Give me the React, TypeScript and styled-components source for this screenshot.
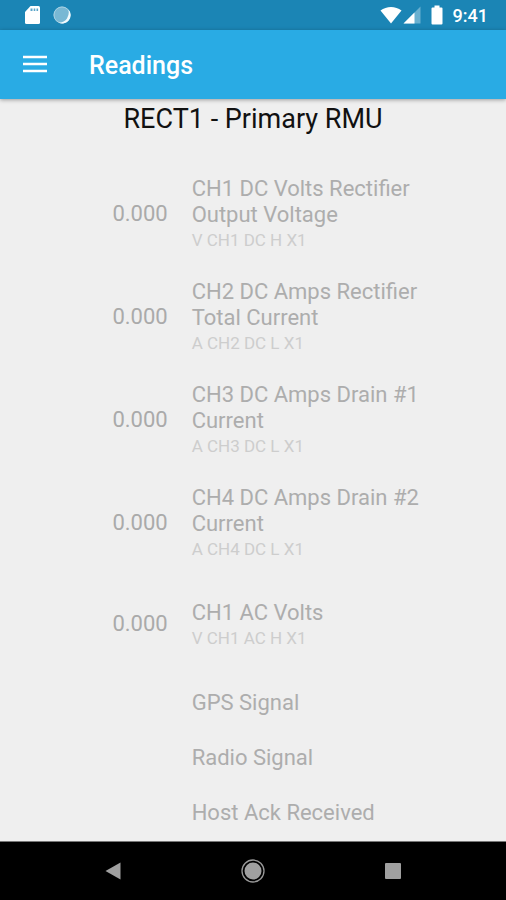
import React from "react";
import styled, { createGlobalStyle } from "styled-components";

const GlobalStyle = createGlobalStyle`
  * { box-sizing: border-box; }
  body {
    margin: 0;
    background: #efefef;
    font-family: Roboto, "Liberation Sans", sans-serif;
  }
`;

const Screen = styled.div`
  min-height: 100vh;
  display: flex;
  flex-direction: column;
`;

const StatusBar = styled.header`
  display: flex;
  align-items: center;
  justify-content: space-between;
  height: 30px;
  padding: 0 18px 0 24px;
  background: #1b85b5;
  color: #fff;
`;

const StatusGroup = styled.div<{ $gap: number }>`
  display: flex;
  align-items: center;
  gap: ${(p) => p.$gap}px;
`;

const Clock = styled.time`
  padding-top: 2px;
  font-size: 18px;
  font-weight: 500;
  line-height: 20px;
`;

const AppBar = styled.div`
  display: flex;
  align-items: center;
  gap: 39px;
  height: 69px;
  padding: 0 20px;
  background: #29abe4;
  color: #fff;
  box-shadow: 0 1px 4px rgba(0, 0, 0, 0.35);
`;

const MenuButton = styled.button`
  display: flex;
  padding: 0 0 2px;
  border: 0;
  background: none;
  color: inherit;
`;

const Title = styled.h1`
  margin: 0;
  padding-top: 2px;
  font-size: 25px;
  font-weight: 500;
  line-height: 30px;
`;

const Content = styled.main`
  flex: 1;
`;

const UnitName = styled.h2`
  margin: 0;
  padding: 5px 0 28px;
  color: #111;
  font-size: 27px;
  font-weight: 400;
  line-height: 31px;
  text-align: center;
`;

const ReadingList = styled.ul`
  margin: 0;
  padding: 0;
  list-style: none;
`;

const ReadingRow = styled.li<{ $compact?: boolean }>`
  display: grid;
  grid-template-columns: 1fr 2fr;
  align-items: center;
  min-height: ${(p) => (p.$compact ? 55 : 100)}px;
  padding: ${(p) => (p.$compact ? 0 : 13)}px 0;
`;

const Value = styled.span`
  padding: 0 1px 2px 0;
  color: #aaa;
  font-size: 22px;
  line-height: 26px;
  text-align: right;
`;

const Label = styled.div`
  grid-column: 2;
  padding: 0 76px 0 23px;
  color: #adadad;
  font-size: 22px;
  line-height: 26px;
`;

const Detail = styled.div`
  color: #cdcdcd;
  font-size: 17px;
  line-height: 25px;
`;

const NavBar = styled.nav`
  display: flex;
  align-items: center;
  justify-content: center;
  gap: 100px;
  height: 59px;
  border-top: 1px solid #777;
  background: #000;
`;

const NavButton = styled.button`
  display: grid;
  place-items: center;
  width: 40px;
  height: 40px;
  padding: 0;
  border: 0;
  background: none;
`;

type Reading = { label: string; detail?: string; value?: string };

const readings: Reading[] = [
  { value: "0.000", label: "CH1 DC Volts Rectifier Output Voltage", detail: "V CH1 DC H X1" },
  { value: "0.000", label: "CH2 DC Amps Rectifier Total Current", detail: "A CH2 DC L X1" },
  { value: "0.000", label: "CH3 DC Amps Drain #1 Current", detail: "A CH3 DC L X1" },
  { value: "0.000", label: "CH4 DC Amps Drain #2 Current", detail: "A CH4 DC L X1" },
  { value: "0.000", label: "CH1 AC Volts", detail: "V CH1 AC H X1" },
  { label: "GPS Signal" },
  { label: "Radio Signal" },
  { label: "Host Ack Received" },
];

export default function App() {
  return (
    <Screen>
      <GlobalStyle />
      <StatusBar>
        <StatusGroup $gap={12}>
          <svg width="17" height="20" viewBox="0 0 17 20" aria-hidden="true">
            <path d="M6.500 1h8q1.500 0 1.500 1.500v15q0 1.500-1.500 1.500h-12q-1.500 0-1.500-1.500V7z" fill="#fff" />
            <path d="M6.500 3.500h2v2.500h-2zM9.700 3.500h1.600v2.500H9.700zM12.500 3.500h1.600v2.500h-1.600z" fill="#5ba5c9" />
          </svg>
          <svg width="18" height="18" viewBox="0 0 18 18" aria-hidden="true">
            <circle cx="9" cy="9" r="8.500" fill="#79b8d4" />
            <circle cx="9" cy="9" r="8" fill="none" stroke="#a5d0e3" strokeWidth="1" />
            <path d="M15.500 3.500A8.500 8.500 0 0 1 5.500 16.800Q11.500 16.500 14 12.500T15.500 3.500z" fill="#f2fafd" />
          </svg>
        </StatusGroup>
        <StatusGroup $gap={10}>
          <StatusGroup $gap={1}>
            <svg width="22" height="18" viewBox="0 0 22 18" aria-hidden="true">
              <path d="M.5 4.500C6.500-.3 15.500-.3 21.500 4.500L11 17.500z" fill="#fff" />
            </svg>
            <svg width="18" height="18" viewBox="0 0 18 18" aria-hidden="true">
              <path d="M17.500.5v17H.5z" fill="#69b0d0" />
              <path d="M11.500 6.500v11H.5z" fill="#fff" />
            </svg>
          </StatusGroup>
          <svg width="12" height="20" viewBox="0 0 12 20" aria-hidden="true">
            <path d="M3.500.5h5v2h2q1 0 1 1v15q0 1-1 1h-9q-1 0-1-1V3.500q0-1 1-1h2z" fill="#fff" />
          </svg>
          <Clock>9:41</Clock>
        </StatusGroup>
      </StatusBar>

      <AppBar>
        <MenuButton aria-label="Open menu">
          <svg width="30" height="20" viewBox="0 0 30 20" aria-hidden="true">
            <path d="M3 3h24M3 10h24M3 17h24" stroke="#fff" strokeWidth="2.700" />
          </svg>
        </MenuButton>
        <Title>Readings</Title>
      </AppBar>

      <Content>
        <UnitName>RECT1 - Primary RMU</UnitName>
        <ReadingList>
          {readings.map((r) => (
            <ReadingRow key={r.label} $compact={!r.detail}>
              {r.value && <Value>{r.value}</Value>}
              <Label>
                {r.label}
                {r.detail && <Detail>{r.detail}</Detail>}
              </Label>
            </ReadingRow>
          ))}
        </ReadingList>
      </Content>

      <NavBar aria-label="System navigation">
        <NavButton aria-label="Back">
          <svg width="16" height="18" viewBox="0 0 16 18" aria-hidden="true">
            <path d="M15.500.5v17L.5 9z" fill="#a0a0a0" />
          </svg>
        </NavButton>
        <NavButton aria-label="Home">
          <svg width="24" height="24" viewBox="0 0 24 24" aria-hidden="true">
            <circle cx="12" cy="12" r="11" fill="none" stroke="#999" strokeWidth="1.300" />
            <circle cx="12" cy="12" r="8.500" fill="#a0a0a0" />
          </svg>
        </NavButton>
        <NavButton aria-label="Recent apps">
          <svg width="16" height="16" viewBox="0 0 16 16" aria-hidden="true">
            <rect width="16" height="16" rx="1" fill="#a0a0a0" />
          </svg>
        </NavButton>
      </NavBar>
    </Screen>
  );
}
